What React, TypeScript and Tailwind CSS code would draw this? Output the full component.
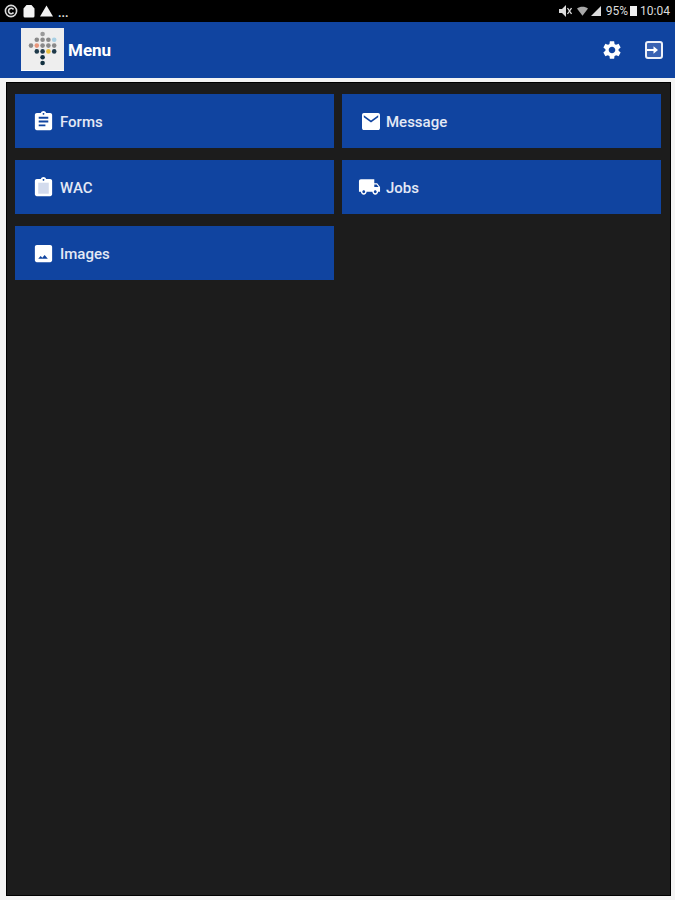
import React from 'react'

const FONT = "font-['Roboto','Liberation_Sans',sans-serif]"

const DOTS: [number, number, string][] = [
  [2, 0, '#9a9a9a'],
  [1, 1, '#8a8a8a'], [2, 1, '#8a8a8a'], [3, 1, '#8a8a8a'], [4, 1, '#a8d0e4'],
  [0, 2, '#8a8a8a'], [1, 2, '#e8957a'], [2, 2, '#8a8a8a'], [3, 2, '#8a8a8a'], [4, 2, '#8a8a8a'],
  [1, 3, '#1f3a4a'], [2, 3, '#1f3a4a'], [3, 3, '#e8c040'], [4, 3, '#1f3a4a'],
  [2, 4, '#12303f'],
  [2, 5, '#12303f'],
]

function Logo() {
  return (
    <div className="w-[43px] h-[43px] -mt-[1px] bg-[#eeeeee] border-b border-white">
      <svg width="43" height="43" viewBox="0 0 43 43">
        {DOTS.map(([col, row, fill], i) => (
          <circle key={i} cx={10 + col * 5.8} cy={6 + row * 5.8} r="2.3" fill={fill} />
        ))}
      </svg>
    </div>
  )
}

function FormsIcon() {
  return (
    <svg width="23" height="23" viewBox="0 0 24 24" fill="white">
      <path d="M19 3h-4.18C14.4 1.84 13.3 1 12 1s-2.4.84-2.82 2H5c-1.1 0-2 .9-2 2v14c0 1.1.9 2 2 2h14c1.1 0 2-.9 2-2V5c0-1.1-.9-2-2-2zm-7 0c.55 0 1 .45 1 1s-.45 1-1 1-1-.45-1-1 .45-1 1-1zm2 14H7v-2h7v2zm3-4H7v-2h10v2zm0-4H7V7h10v2z" />
    </svg>
  )
}

function WacIcon() {
  return (
    <svg width="23" height="23" viewBox="0 0 24 24" fill="white">
      <path d="M19 3h-4.18C14.4 1.84 13.3 1 12 1s-2.4.84-2.82 2H5c-1.1 0-2 .9-2 2v14c0 1.1.9 2 2 2h14c1.1 0 2-.9 2-2V5c0-1.1-.9-2-2-2zm-7 0c.55 0 1 .45 1 1s-.45 1-1 1-1-.45-1-1 .45-1 1-1z" />
      <path d="M6.5 7h11v11.5h-11z" fill="#d3dbed" />
    </svg>
  )
}

function ImagesIcon() {
  return (
    <svg width="23" height="23" viewBox="0 0 24 24" fill="white">
      <path fillRule="evenodd" d="M21 19V5c0-1.1-.9-2-2-2H5c-1.1 0-2 .9-2 2v14c0 1.1.9 2 2 2h14c1.1 0 2-.9 2-2zM9 14.5l1.8 2 2.4-3 3.3 4h-10z" />
    </svg>
  )
}

function MessageIcon() {
  return (
    <svg width="18" height="17" viewBox="2 4 20 16" preserveAspectRatio="none" fill="white">
      <path d="M20 4H4c-1.1 0-2 .9-2 2v12c0 1.1.9 2 2 2h16c1.1 0 2-.9 2-2V6c0-1.1-.9-2-2-2zm0 4l-8 5-8-5V6l8 5 8-5v2z" />
    </svg>
  )
}

function TruckIcon() {
  return (
    <svg width="24" height="24" viewBox="0 0 24 24" fill="white">
      <path d="M20 8h-3V4H3c-1.1 0-2 .9-2 2v11h2c0 1.66 1.34 3 3 3s3-1.34 3-3h6c0 1.66 1.34 3 3 3s3-1.34 3-3h2v-5l-3-4zM6 18.5c-.83 0-1.5-.67-1.5-1.5s.67-1.5 1.5-1.5 1.5.67 1.5 1.5-.67 1.5-1.5 1.5zm13.5-9l1.96 2.5H17V9.5h2.5zm-1.5 9c-.83 0-1.5-.67-1.5-1.5s.67-1.5 1.5-1.5 1.5.67 1.5 1.5-.67 1.5-1.5 1.5z" />
    </svg>
  )
}

function GearIcon() {
  return (
    <svg width="22" height="22" viewBox="0 0 24 24" fill="white">
      <path d="M19.14 12.94c.04-.3.06-.61.06-.94 0-.32-.02-.64-.07-.94l2.03-1.58c.18-.14.23-.41.12-.61l-1.92-3.32c-.12-.22-.37-.29-.59-.22l-2.39.96c-.5-.38-1.03-.7-1.62-.94l-.36-2.54c-.04-.24-.24-.41-.48-.41h-3.84c-.24 0-.43.17-.47.41l-.36 2.54c-.59.24-1.13.57-1.62.94l-2.39-.96c-.22-.08-.47 0-.59.22L2.74 8.87c-.12.21-.08.47.12.61l2.03 1.58c-.05.3-.09.63-.09.94s.02.64.07.94l-2.03 1.58c-.18.14-.23.41-.12.61l1.92 3.32c.12.22.37.29.59.22l2.39-.96c.5.38 1.03.7 1.62.94l.36 2.54c.05.24.24.41.48.41h3.84c.24 0 .44-.17.47-.41l.36-2.54c.59-.24 1.13-.56 1.62-.94l2.39.96c.22.08.47 0 .59-.22l1.92-3.32c.12-.22.07-.47-.12-.61l-2.01-1.58zM12 15.6c-1.98 0-3.6-1.62-3.6-3.6s1.62-3.6 3.6-3.6 3.6 1.62 3.6 3.6-1.62 3.6-3.6 3.6z" />
    </svg>
  )
}

// closed rounded box with the arrow running in from the left edge
function ExitIcon() {
  return (
    <svg width="18" height="18" viewBox="0 0 18 18" fill="none">
      <rect x="1" y="1" width="16" height="16" rx="2" fill="#3a63b3" stroke="#eef1f9" strokeWidth="2" />
      <path d="M2 8h6.5V5.2L13 9l-4.500 3.800V10H2z" fill="white" />
    </svg>
  )
}

function StatusBar() {
  return (
    <div className="h-[22px] bg-black flex items-center justify-between pl-[4px] pr-[5px] text-[#dcdcdc]">
      <div className="flex items-center">
        <svg width="14" height="14" viewBox="0 0 14 14" fill="none" stroke="#dcdcdc" strokeWidth="1.6">
          <circle cx="7" cy="7" r="5.6" />
          <path d="M9.500 5.500A2.700 2.700 0 1 0 9.500 8.500" />
        </svg>
        <svg width="12" height="13" viewBox="0 0 12 13" fill="#f2f2f2" className="ml-[5px]">
          <path d="M3.500 0h5l3 3.500V11a1.500 1.500 0 0 1-1.500 1.500H2A1.500 1.500 0 0 1 .5 11V3.500z" />
        </svg>
        <svg width="13" height="12" viewBox="0 0 13 12" fill="#f2f2f2" className="ml-[5px]">
          <path d="M6.500 .5l6.500 11H0z" />
        </svg>
        <span className={`${FONT} text-[12px] font-bold leading-none ml-[5px] mt-[3px]`}>...</span>
      </div>
      <div className={`${FONT} flex items-center text-[12px] leading-none`}>
        <svg width="13" height="12" viewBox="0 0 13 12" fill="#dcdcdc">
          <path d="M0 4h3l4-4v12L3 8H0z" />
          <path d="M8.500 3l4 6M12.500 3l-4 6" stroke="#dcdcdc" strokeWidth="1.300" />
        </svg>
        <svg width="11" height="11" viewBox="0 0 13 12" fill="#a8a8a8" className="ml-[5px]">
          <path d="M0 2.500C3.500-.5 9.500-.5 13 2.500L6.500 11z" />
        </svg>
        <svg width="10" height="10" viewBox="0 0 11 11" fill="#dcdcdc" className="ml-[3px]">
          <path d="M11 0v11H0z" />
        </svg>
        <span className="ml-[5px]">95%</span>
        <div className="w-[7px] h-[10px] bg-[#f0f0f0] ml-[2px]" />
        <span className="ml-[3px]">10:04</span>
      </div>
    </div>
  )
}

function MenuButton({ icon, label, iconClass }: { icon: React.ReactNode; label: string; iconClass?: string }) {
  return (
    <div className="h-[54px] bg-[#1044a0] flex items-center pl-[17px]">
      <div className={`w-[23px] flex justify-center shrink-0 ${iconClass ?? ''}`}>{icon}</div>
      <span className={`${FONT} ml-[5px] mt-[2px] text-[15px] font-medium text-[#e4e9f5]`}>{label}</span>
    </div>
  )
}

export default function App() {
  return (
    <div className="w-[675px] h-[900px] bg-[#f4f4f4] flex flex-col overflow-hidden">
      <StatusBar />
      <div className="h-[56px] bg-[#1044a0] flex items-center pl-[21px] pr-[12px]">
        <Logo />
        <span className={`${FONT} ml-[4px] mt-[2px] text-[17px] font-bold text-white`}>Menu</span>
        <div className="ml-auto flex items-center gap-[22px]">
          <GearIcon />
          <ExitIcon />
        </div>
      </div>
      <div className="flex-1 pt-[4px] pb-[4px] pl-[6px] pr-[4px] flex">
        <div className="flex-1 bg-[#1c1c1c] border border-black pt-[11px] pl-[8px] pr-[9px]">
          <div className="grid grid-cols-2 gap-x-[8px] gap-y-[12px]">
            <MenuButton icon={<FormsIcon />} label="Forms" />
            <MenuButton icon={<MessageIcon />} label="Message" iconClass="mr-[-1px]" />
            <MenuButton icon={<WacIcon />} label="WAC" />
            <MenuButton icon={<TruckIcon />} label="Jobs" iconClass="ml-[-1px]" />
            <MenuButton icon={<ImagesIcon />} label="Images" />
          </div>
        </div>
      </div>
    </div>
  )
}
